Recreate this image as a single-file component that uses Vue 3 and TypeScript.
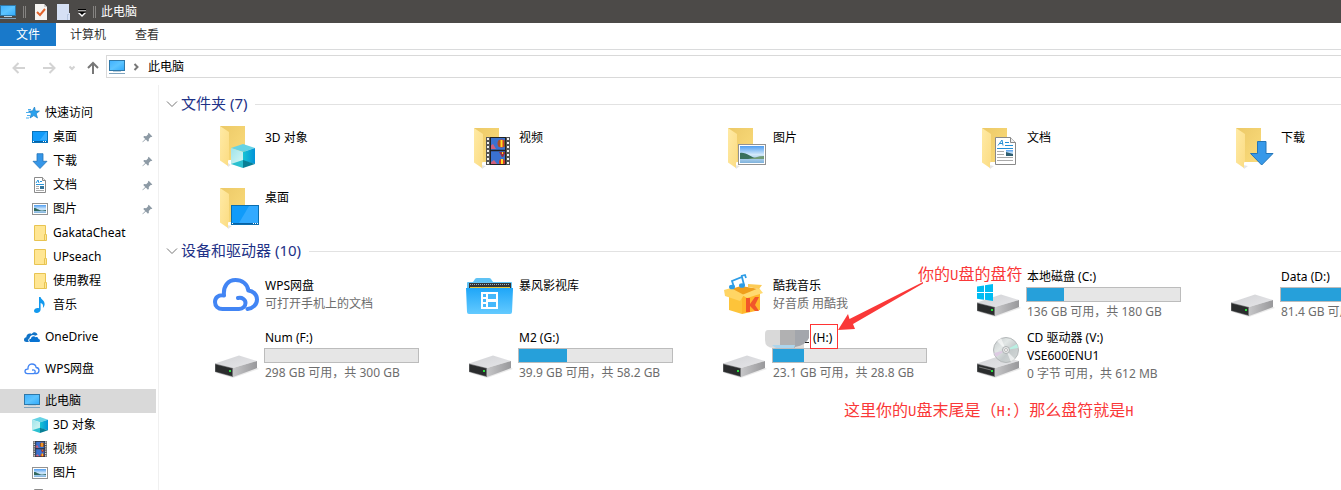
<script setup lang="ts">
interface NavItem { label: string; icon: string; pinned?: boolean; child?: boolean; selected?: boolean }
interface Tile { label: string; icon: string; note?: string; used?: number; extra?: string; masked?: boolean }
interface Group { title: string; kind: string; tiles: Tile[] }

const tabs = ['计算机', '查看']

const navGroups: NavItem[][] = [
  [
    { label: '快速访问', icon: 'star' },
    { label: '桌面', icon: 'desktop', child: true, pinned: true },
    { label: '下载', icon: 'down', child: true, pinned: true },
    { label: '文档', icon: 'doc', child: true, pinned: true },
    { label: '图片', icon: 'pic', child: true, pinned: true },
    { label: 'GakataCheat', icon: 'folder', child: true },
    { label: 'UPseach', icon: 'folder', child: true },
    { label: '使用教程', icon: 'folder', child: true },
    { label: '音乐', icon: 'music', child: true },
  ],
  [{ label: 'OneDrive', icon: 'onedrive' }],
  [{ label: 'WPS网盘', icon: 'wps' }],
  [
    { label: '此电脑', icon: 'pc', selected: true },
    { label: '3D 对象', icon: 'cube', child: true },
    { label: '视频', icon: 'film', child: true },
    { label: '图片', icon: 'pic', child: true },
    { label: '文档', icon: 'doc', child: true },
  ],
]

const groups: Group[] = [
  {
    title: '文件夹 (7)',
    kind: 'folders',
    tiles: [
      { label: '3D 对象', icon: 'big-cube' },
      { label: '视频', icon: 'big-film' },
      { label: '图片', icon: 'big-pic' },
      { label: '文档', icon: 'big-doc' },
      { label: '下载', icon: 'big-down' },
      { label: '桌面', icon: 'big-desktop' },
    ],
  },
  {
    title: '设备和驱动器 (10)',
    kind: 'drives',
    tiles: [
      { label: 'WPS网盘', icon: 'big-wps', note: '可打开手机上的文档' },
      { label: '暴风影视库', icon: 'big-video' },
      { label: '酷我音乐', icon: 'big-kuwo', note: '好音质 用酷我' },
      { label: '本地磁盘 (C:)', icon: 'big-system', used: 24.4, note: '136 GB 可用，共 180 GB' },
      { label: 'Data (D:)', icon: 'big-drive', used: 72, note: '81.4 GB 可用' },
      { label: 'Num (F:)', icon: 'big-drive', used: 0, note: '298 GB 可用，共 300 GB' },
      { label: 'M2 (G:)', icon: 'big-drive', used: 31.4, note: '39.9 GB 可用，共 58.2 GB' },
      { label: '(H:)', icon: 'big-drive', used: 20, note: '23.1 GB 可用，共 28.8 GB', masked: true },
      { label: 'CD 驱动器 (V:)', icon: 'big-cd', extra: 'VSE600ENU1', note: '0 字节 可用，共 612 MB' },
    ],
  },
]
</script>

<template>
  <div class="window">
    <svg class="sprite" width="0" height="0" aria-hidden="true">
      <defs>
        <linearGradient id="g-screen" x1="0" y1="0" x2="1" y2="1">
          <stop offset="0" stop-color="#3fb0ff" /><stop offset=".5" stop-color="#5cc4ff" /><stop offset="1" stop-color="#2fa9fb" />
        </linearGradient>
        <linearGradient id="g-back" x1="0" y1="0" x2="1" y2="1">
          <stop offset="0" stop-color="#ecc967" /><stop offset="1" stop-color="#fbdc7c" />
        </linearGradient>
        <linearGradient id="g-flap" x1="0" y1="0" x2="1" y2="1">
          <stop offset="0" stop-color="#ffeaa5" /><stop offset="1" stop-color="#fbdc83" />
        </linearGradient>
        <linearGradient id="g-right" x1="0" y1="0" x2="1" y2="0">
          <stop offset="0" stop-color="#16c3d4" /><stop offset="1" stop-color="#0292d8" />
        </linearGradient>
        <linearGradient id="g-left" x1="0" y1="0" x2="1" y2="1">
          <stop offset="0" stop-color="#9fe4ea" /><stop offset="1" stop-color="#d5f6f3" />
        </linearGradient>
        <linearGradient id="g-sky" x1="0" y1="0" x2="0" y2="1">
          <stop offset="0" stop-color="#4f9df0" /><stop offset=".5" stop-color="#d3e9fb" /><stop offset="1" stop-color="#7fb2dc" />
        </linearGradient>
        <linearGradient id="g-video" x1="0" y1="0" x2="0" y2="1">
          <stop offset="0" stop-color="#1fa6f8" /><stop offset="1" stop-color="#63caff" />
        </linearGradient>
        <linearGradient id="g-top" x1="0" y1="0" x2="1" y2="1">
          <stop offset="0" stop-color="#d2d3d6" /><stop offset="1" stop-color="#e6e6e9" />
        </linearGradient>
        <linearGradient id="g-side" x1="0" y1="0" x2="1" y2="0">
          <stop offset="0" stop-color="#c6c6c8" /><stop offset="1" stop-color="#98989b" />
        </linearGradient>
        <linearGradient id="g-disc" x1="0" y1="0" x2="1" y2="1">
          <stop offset="0" stop-color="#c3c8ca" /><stop offset=".35" stop-color="#e2e7e6" />
          <stop offset=".6" stop-color="#c4cacb" /><stop offset="1" stop-color="#d6dada" />
        </linearGradient>
      </defs>

      <symbol id="pc" viewBox="0 0 16 16">
        <rect x=".5" y="1.500" width="15" height="10" fill="url(#g-screen)" stroke="#2f78a8" />
        <path d="M4 12.500h8" stroke="#b9cfde" /><path d="M0 14.500h16" stroke="#7fa3bd" />
      </symbol>
      <symbol id="star" viewBox="0 0 16 16">
        <path d="M10.500 2l.9 4 4 .1-3.200 2.600L13.500 13 9.800 10.600 6 13l1.300-4.300L4.500 6l4-.1z" fill="#2aa1ee" stroke="#1c7fc6" stroke-width=".7" />
        <path d="M4 4.500h3M2 7.500h4M3 10.500h3M2 13h3" stroke="#4aaeee" />
      </symbol>
      <symbol id="desktop" viewBox="0 0 16 16">
        <rect x=".5" y="2.500" width="15" height="11" fill="#109bfa" stroke="#0872b8" />
        <path d="M8 11L14 3h1v8z" fill="#35adff" /><path d="M1 12.500h14" stroke="#0561a5" /><path d="M1 12.500h1M11 12.500h1M13 12.500h1" stroke="#fff" />
      </symbol>
      <symbol id="down" viewBox="0 0 16 16">
        <path d="M5 .7h6v7.600h4L8 15.500 1 8.300h4z" fill="#3596e8" stroke="#2474b8" stroke-width=".8" />
      </symbol>
      <symbol id="doc" viewBox="0 0 16 16">
        <path d="M2.500.5h8l3 3v12h-11z" fill="#fff" stroke="#8b8b8b" /><path d="M10.500.5v3h3" fill="#eee" stroke="#8b8b8b" />
        <path d="M4 6l2-3 1 3M8 4.500h2M4 7.500h8" fill="none" stroke="#2995da" />
        <path d="M4 9.500h3M4 11.500h3M4 13.500h8" stroke="#aaa" /><path d="M8 9h4v3H8z" fill="#35769b" />
      </symbol>
      <symbol id="pic" viewBox="0 0 16 16">
        <rect x=".5" y="2.500" width="15" height="11" fill="#fff" stroke="#929292" /><path d="M2 4h12v8H2z" fill="url(#g-sky)" />
        <path d="M2 7c3 0 4 2 8 3H2zM8 10l6-1v1z" fill="#32695f" />
      </symbol>
      <symbol id="folder" viewBox="0 0 16 16">
        <path d="M2.500.5h11v9h1v6h-12z" fill="#ffe693" stroke="#e8c452" /><path d="M12.500 15V9.500h1" fill="none" stroke="#e8c452" />
      </symbol>
      <symbol id="music" viewBox="0 0 16 16">
        <path d="M7 0h1.600c.4 2.700 4.400 3.500 4 7.500-.2 1.500-.8 2.500-1.700 3.500.4-2.600.2-4.200-2.300-5v6.500C8.600 14.800 6.500 16 4.700 16 3.200 16 2 15.200 2 13.800 2 11.800 4.800 10.500 7 11.200z" fill="#1299ee" />
      </symbol>
      <symbol id="onedrive" viewBox="0 0 16 16">
        <path d="M5 13H2.600C.9 13 0 12 0 10.700c0-1.300 1-2.300 2.300-2.400C2.300 5.400 5.300 3.700 7.700 5 9.500 2.200 13 3.200 13.500 6c-1 0-1.800.3-2.300.8C9 5 5.700 6.500 5.600 9.200 3.900 9.700 3.800 11.800 5 13z" fill="#1173c7" />
        <path d="M7 13c-2.300 0-2.500-3 0-3.200C6.900 7 10.400 6.300 11.600 8.300c1.300-.7 2.800.2 2.800 1.800C16.600 10.400 16.400 13 14.500 13z" fill="#0873d2" />
      </symbol>
      <symbol id="cloud" viewBox="0 0 48 48">
        <path d="M35.500 38C41 37.500 45 33.500 45 28.500C45 23.500 41 19.800 36.300 19.400C35.500 13 30 9 23.500 9C16 9 11 15 12 24.500C6 23.500 3 27 3 31C3 35 6 38 10.500 38H27C31 38 33.500 35 33.500 32C33.500 28.500 30 26 26 27" fill="none" stroke="#4285f4" stroke-width="4" stroke-linecap="round" stroke-linejoin="round" />
      </symbol>
      <symbol id="wps" viewBox="0 0 16 16"><use href="#cloud" width="16" height="16" /></symbol>
      <symbol id="cube-shape" viewBox="0 0 24 24">
        <path d="M12 0l12 4-12 4L0 4z" fill="#66d3e5" /><path d="M0 4l12 4v11L0 20z" fill="url(#g-left)" />
        <path d="M12 8l12-4v16l-12-3z" fill="url(#g-right)" /><path d="M0 20l12-4v8z" fill="#2bc0d0" /><path d="M12 16l12 4-12 4z" fill="#087f96" />
      </symbol>
      <symbol id="cube" viewBox="0 0 16 16"><use href="#cube-shape" width="16" height="16" /></symbol>
      <symbol id="film-shape" viewBox="0 0 24 28">
        <path d="M0 0h24v28H0z" fill="#555" /><path d="M4 1h16v26H4z" fill="#3a72cf" />
        <path d="M2 1v26M22 1v26" stroke="#f3f3f3" stroke-width="2" stroke-dasharray="2 2" />
        <path d="M4 9l3-2 3 5H4zM4 26l4-3 3 4H4z" fill="#d0607c" />
        <circle cx="15.500" cy="6.500" r="4" fill="#d33b2a" /><path d="M14.500 3h2v7h-2z" fill="#ffdd24" /><path d="M12.500 3.500h1v6h-1zM18 3.500h1v6h-1z" fill="#7a6a20" />
        <circle cx="16" cy="25" r="3" fill="#d33b2a" /><path d="M15 22h2v5h-2z" fill="#ffdd24" />
        <path d="M13 15h7l-3 5h-1z" fill="#9c3040" /><path d="M16 15h1v2h-1z" fill="#ffdd24" />
        <path d="M4 13.500h16" stroke="#222" stroke-width="1.500" /><path d="M4.500 0v28M19.500 0v28M4 .5h16M4 27.500h16" stroke="#222" />
      </symbol>
      <symbol id="film" viewBox="0 0 16 16"><use href="#film-shape" x="1" y="0" width="14" height="16" /></symbol>
      <symbol id="pin" viewBox="0 0 12 12">
        <path d="M7.300.8l4 4-1 .7-.8-.1L7.400 7.500l.1 2-1 1L4.200 8.200.8 11.300l-.5-.4L3.500 7.500 1.400 5.400l1-1 2.200.1L6.700 2.400l-.1-.9z" fill="#8d9aa5" />
      </symbol>
      <symbol id="folder-shape" viewBox="0 0 28 42">
        <path d="M7 37l5 1-4 3z" fill="#000" opacity=".1" /><path d="M0 0h25v34H7z" fill="url(#g-back)" /><path d="M0 0l9 6v28l-1 .5V40l-8-5.500z" fill="url(#g-flap)" />
      </symbol>
      <symbol id="big-cube" viewBox="0 0 48 48">
        <use href="#folder-shape" x="8" y="3" width="28" height="42" /><path d="M17 37h2v5l-2-1z" fill="#fff" />
        <use href="#cube-shape" x="19" y="21" width="24" height="24" />
      </symbol>
      <symbol id="big-film" viewBox="0 0 48 48">
        <use href="#folder-shape" x="8" y="5" width="28" height="42" /><use href="#film-shape" x="20" y="14" width="24" height="28" />
      </symbol>
      <symbol id="big-pic" viewBox="0 0 48 48">
        <use href="#folder-shape" x="8" y="5" width="28" height="42" /><rect x="18.500" y="21.500" width="27" height="20" fill="#fff" stroke="#929292" />
        <path d="M20 23h24v17H20z" fill="url(#g-sky)" /><path d="M20 30c6-1 11 4 17 6H20z" fill="#38705c" /><path d="M28 36c6-1 10-3 16-3v3z" fill="#729c78" />
      </symbol>
      <symbol id="big-doc" viewBox="0 0 48 48">
        <use href="#folder-shape" x="8" y="5" width="28" height="42" /><path d="M21.500 14.500h15l5 5v22h-20z" fill="#fff" stroke="#898989" /><path d="M36.500 14.500v5h5" fill="#eee" stroke="#898989" />
        <path d="M24 22.500l4-5.500 1 5.500M25.500 20.500h3.500M31 19.500h4M31 22.500h8M23 25.500h16" fill="none" stroke="#248fd5" />
        <path d="M23 28.500h7M23 31.500h7M23 34.500h16M23 37.500h16" stroke="#aaa" /><path d="M32 27h7v6h-7z" fill="url(#g-sky)" /><path d="M32 29l7 2v2h-7z" fill="#315f70" />
      </symbol>
      <symbol id="big-down" viewBox="0 0 48 48">
        <use href="#folder-shape" x="8" y="5" width="28" height="42" /><path d="M29.500 18.500h8.500v12h7L33.700 42 22.500 30.500h7z" fill="#3799e9" stroke="#2476b8" />
      </symbol>
      <symbol id="big-desktop" viewBox="0 0 48 48">
        <use href="#folder-shape" x="8" y="5" width="28" height="42" /><rect x="19.500" y="22.500" width="27" height="19" fill="#109bfa" stroke="#0b6eaf" />
        <path d="M27 40l10-17h9v17z" fill="#32aaff" /><path d="M20 40.500h26" stroke="#0561a5" /><path d="M20 40.500h1M41 40.500h1M43 40.500h1M45 40.500h1" stroke="#fff" />
      </symbol>
      <symbol id="big-wps" viewBox="0 0 48 48"><use href="#cloud" width="48" height="48" /></symbol>
      <symbol id="big-video" viewBox="0 0 48 48">
        <path d="M1 18v-6q0-1 1-1h5l2-3q.5-1 2-1h12q1.500 0 2 1l2 3h18q1 0 1 1v6z" fill="#5fc2f4" />
        <path d="M3 12h42v6H3z" fill="#333" /><path d="M4 13.500h40" stroke="#9db1be" stroke-dasharray="1 1" /><path d="M4 16.500h40" stroke="#e5c73d" />
        <path d="M0 17h47v1l-1 23q0 2-2 2H3q-2 0-2-2z" fill="url(#g-video)" />
        <path d="M15 21h17v17H15z" fill="#fff" /><path d="M17 23h3v3h-3zM17 28h3v3h-3zM17 33h3v3h-3zM22 23h8v5h-8zM22 31h8v5h-8z" fill="#45b8fb" />
      </symbol>
      <symbol id="big-kuwo" viewBox="0 0 48 48">
        <path d="M9 22l13 4v17L9 39z" fill="#fdc43a" /><path d="M22 25l18-3v17l-18 4z" fill="#ffb62a" />
        <path d="M11 18l10-3 18 3-16 7z" fill="#ef9f1c" /><path d="M4 19l7-2 13 7-4 6-15-5z" fill="#ffd564" /><path d="M22 24l17-7 4 5-16 5z" fill="#ffda70" /><path d="M28 13l14 1-3 4-11-2z" fill="#fdcb55" />
        <path d="M26 27h4v6l5-7h4l-4 8 4 6h-4l-5-5v6h-4z" fill="#f1562a" />
        <g fill="#2e9de6"><ellipse cx="12" cy="16" rx="3" ry="2.300" /><ellipse cx="22" cy="14.500" rx="3" ry="2.300" /></g>
        <path d="M14 16l-2-6 10-4 2 8M21 5l4-1 1 3" fill="none" stroke="#2e9de6" stroke-width="1.800" />
      </symbol>
      <symbol id="big-drive" viewBox="0 0 48 48">
        <path d="M4 41l17 5 26-9-3-2z" fill="#000" opacity=".08" />
        <path d="M3 31.500L27 23.500 45 29 21 36z" fill="url(#g-top)" /><path d="M21 36l24-7v7L21 45z" fill="url(#g-side)" />
        <path d="M3 31.500L21 36v9L3 40z" fill="#737476" /><path d="M3.500 32.500L20 36.500v7.500L3.500 39.500z" fill="#2a2c2d" /><path d="M17 38h2v2h-2z" fill="#29df3c" />
      </symbol>
      <symbol id="big-system" viewBox="0 0 48 48">
        <use href="#big-drive" width="48" height="48" />
        <path d="M3 15.500l7-1V21H3zM11 14.300l8-1.300v8h-8zM3 22h7v6.700l-7-1zM11 22h8v8l-8-1.200z" fill="#00bcf2" />
      </symbol>
      <symbol id="big-cd" viewBox="0 0 48 48">
        <use href="#big-drive" width="48" height="48" /><path d="M5 35l12 3" stroke="#777" />
        <circle cx="32" cy="18" r="12.500" fill="url(#g-disc)" stroke="#b4b8b9" />
        <path d="M32 18l-9-9 4-3zM32 18l9 9-4 3z" fill="#fff" opacity=".6" /><path d="M32 18l11-6 1 4z" fill="#b9efe2" /><path d="M32 18l-10 7-2-4z" fill="#dccbe2" />
        <circle cx="32" cy="18" r="3.500" fill="#e9ebeb" stroke="#adb1b2" /><circle cx="32" cy="18" r="1.500" fill="#fff" stroke="#b8b8b8" />
      </symbol>
    </svg>

    <header class="titlebar">
      <svg class="icon"><use href="#pc" /></svg>
      <span class="divider"></span>
      <button class="quick" aria-label="属性">
        <svg width="12" height="16" viewBox="0 0 12 16"><path d="M0 0h9l3 3v13H0z" fill="#f6f4f2" /><path d="M9 0v3h3" fill="#cfcfcf" /><path d="M2 8l3 3 5-6" fill="none" stroke="#e2632c" stroke-width="2" /></svg>
      </button>
      <button class="quick" aria-label="新建文件夹">
        <svg width="13" height="16" viewBox="0 0 13 16"><path d="M0 0h12v9h1v7H0z" fill="#d5e0f4" /><path d="M10.500 16V10.500H12" fill="none" stroke="#b4c5df" /></svg>
      </button>
      <button class="quick more" aria-label="自定义快速访问工具栏">
        <svg width="8" height="8" viewBox="0 0 8 8"><path d="M0 .5h8" stroke="#000" /><path d="M0 1.500h8" stroke="#aaa" /><path d="M0 4h8L4 8z" fill="#fff" /><path d="M1 3h6L4 6z" fill="#000" /></svg>
      </button>
      <span class="divider"></span>
      <h1 class="title">此电脑</h1>
    </header>

    <nav class="ribbon" aria-label="功能区">
      <button class="file">文件</button>
      <button v-for="tab in tabs" :key="tab" class="tab">{{ tab }}</button>
    </nav>

    <div class="location">
      <button class="arrow back" aria-label="后退"><svg width="14" height="14" viewBox="0 0 14 14"><path d="M13 7H1.500M6.500 2l-5 5 5 5" /></svg></button>
      <button class="arrow forward" aria-label="前进"><svg width="14" height="14" viewBox="0 0 14 14"><path d="M1 7h11.500M7.500 2l5 5-5 5" /></svg></button>
      <button class="arrow recent" aria-label="最近浏览的位置"><svg width="8" height="6" viewBox="0 0 8 6"><path d="M1.500 1.500L4 4l2.500-2.500" /></svg></button>
      <button class="arrow up" aria-label="上移"><svg width="14" height="14" viewBox="0 0 14 14"><path d="M7 13V2M2 7l5-5 5 5" /></svg></button>
      <div class="address">
        <svg class="icon"><use href="#pc" /></svg>
        <svg class="crumb-arrow" width="6" height="8" viewBox="0 0 6 8"><path d="M1.500 1l3 3-3 3" /></svg>
        <button class="crumb">此电脑</button>
      </div>
    </div>

    <div class="body">
      <nav class="sidebar" aria-label="导航窗格">
        <ul v-for="(group, g) in navGroups" :key="g">
          <li v-for="item in group" :key="item.label">
            <a href="#" :class="{ child: item.child, selected: item.selected }">
              <svg class="icon"><use :href="'#' + item.icon" /></svg>
              <span>{{ item.label }}</span>
              <svg v-if="item.pinned" class="pin"><use href="#pin" /></svg>
            </a>
          </li>
        </ul>
      </nav>

      <main class="content">
        <section v-for="group in groups" :key="group.title" :class="group.kind">
          <h2>
            <svg width="12" height="8" viewBox="0 0 12 8"><path d="M1 1.500l5 5 5-5" /></svg>
            <span>{{ group.title }}</span>
          </h2>
          <ul class="tiles">
            <li v-for="tile in group.tiles" :key="tile.label" class="tile">
              <svg class="picture"><use :href="'#' + tile.icon" /></svg>
              <div class="info">
                <p class="name" :class="{ masked: tile.masked }">{{ tile.label }}</p>
                <p v-if="tile.extra" class="name">{{ tile.extra }}</p>
                <div v-if="tile.used !== undefined" class="meter" role="meter" :aria-label="tile.label" :aria-valuenow="tile.used" aria-valuemin="0" aria-valuemax="100">
                  <div class="fill" :style="{ width: tile.used + '%' }"></div>
                </div>
                <p class="note">{{ tile.note }}</p>
              </div>
            </li>
          </ul>
        </section>
      </main>
    </div>

    <svg class="markup" width="170" height="90" viewBox="0 0 170 90" aria-hidden="true">
      <path d="M8 68h36v18H14q-9 0-9-8v-6q0-4 3-4z" fill="#d9d9d9" /><path d="M20 68h15v18H20z" fill="#b1b1b2" />
      <path d="M35 68h14v8q-3 7-14 9z" fill="#a3a6ac" /><path d="M12 83h23l-1 3H16z" fill="#acd5ed" /><path d="M45 80.500h4" stroke="#222" />
      <rect x="50.500" y="62.500" width="27" height="24" fill="none" stroke="#f33" />
      <path d="M78 68l10-16 1.500 5L163 20v1.500L93 62l2 5z" fill="#fa3838" />
    </svg>
    <p class="remark remark-arrow">你的<span>U</span>盘的盘符</p>
    <p class="remark remark-below">这里你的<span>U</span>盘末尾是（<span>H:</span>）那么盘符就是<span>H</span></p>
  </div>
</template>

<style>
body { overflow: hidden; background: #fff; }
</style>

<style scoped>
.window { position: relative; height: 100vh; overflow: hidden; display: flex; flex-direction: column; background: #fff; color: #000; font: 12px/18px "Noto Sans", "Noto Sans CJK SC", sans-serif; }
.sprite { position: absolute; }
h1, h2, p, ul { margin: 0; padding: 0; font-weight: 400; }
ul { list-style: none; }
button { margin: 0; padding: 0; border: 0; background: none; color: inherit; font: inherit; }
svg { display: block; flex: none; }
.icon { width: 16px; height: 16px; }

.titlebar { flex: none; display: flex; align-items: center; height: 23px; background: #4c4a48; color: #fff; }
.divider { width: 1px; height: 12px; margin: 0 9px 0 7px; border: 0 solid #858381; border-width: 0 1px; }
.quick { margin-right: 10px; }
.quick.more { margin: 2px 0 0 -2px; }
.title { font-size: 12px; line-height: 18px; margin-left: -4px; }

.ribbon { flex: none; display: flex; align-items: flex-start; height: 26px; border-bottom: 1px solid #dadbdc; color: #333; }
.file { width: 56px; height: 23px; background: #1979ca; color: #fff; }
.tab { height: 24px; padding: 0 14px; }
.tab + .tab { padding-left: 15px; }

.location { flex: none; display: flex; align-items: center; height: 35px; }
.arrow svg, .crumb-arrow, h2 svg { fill: none; stroke: #d3d3d3; stroke-width: 2; }
.back { margin-left: 12px; }
.forward { margin-left: 16px; }
.recent { margin-left: 12px; }
.up { margin-left: 10px; }
.arrow.up svg { stroke: #777; }
.address { flex: 1; display: flex; align-items: center; height: 21px; margin: -2px 0 0 6px; padding-left: 2px; border: 1px solid #d9d9d9; border-right: 0; }
.crumb-arrow { margin: 0 9px 0 8px; stroke: #777; }

.body { flex: 1; min-height: 0; display: flex; }
.sidebar { flex: none; width: 158px; padding-top: 16px; border-right: 1px solid #f0f0f0; }
.sidebar ul + ul { margin-top: 8px; }
.sidebar a { display: flex; align-items: center; gap: 5px; height: 24px; width: 156px; padding: 0 3px 0 24px; box-sizing: border-box; color: inherit; text-decoration: none; }
.sidebar a.child { padding-left: 32px; }
.sidebar a.selected { background: #d9d9d9; }
.pin { width: 11px; height: 11px; margin-left: auto; }

.content { flex: 1; min-width: 0; overflow: hidden; padding: 9px 0 0 7px; }
h2 { display: flex; align-items: center; gap: 3px; height: 20px; color: #1e3287; font-size: 15px; line-height: 18px; }
h2 span { padding-bottom: 2px; }
h2 svg { stroke: #777; stroke-width: 1; }
h2::after { content: ""; flex: 1; height: 1px; margin-left: 5px; background: #e2e2e2; }
.tiles { display: grid; grid-template-columns: repeat(5, 254px); grid-auto-rows: 61px; padding: 3px 0 0 46px; }
.folders .tiles { grid-auto-rows: 60px; padding-bottom: 4px; }
.tile { display: flex; align-items: center; gap: 4px; }
.picture { width: 48px; height: 48px; }
.info { width: 155px; }
.name, .note { min-height: 18px; padding-left: 1px; white-space: nowrap; }
.note { color: #6d6d6d; }
.name.masked { padding-left: 41px; }
.meter { height: 15px; margin: 1px 0; box-sizing: border-box; border: 1px solid #bcbcbc; background: #e6e6e6; }
.fill { height: 100%; background: #26a0da; }

.markup { position: absolute; left: 760px; top: 262px; }
.remark { position: absolute; color: #fa3838; font: 16px/20px "Noto Sans CJK SC", sans-serif; white-space: nowrap; }
.remark span { font-family: "Liberation Mono", monospace; font-size: 14px; }
.remark-arrow { left: 918px; top: 263px; }
.remark-below { left: 844px; top: 399px; }
</style>
